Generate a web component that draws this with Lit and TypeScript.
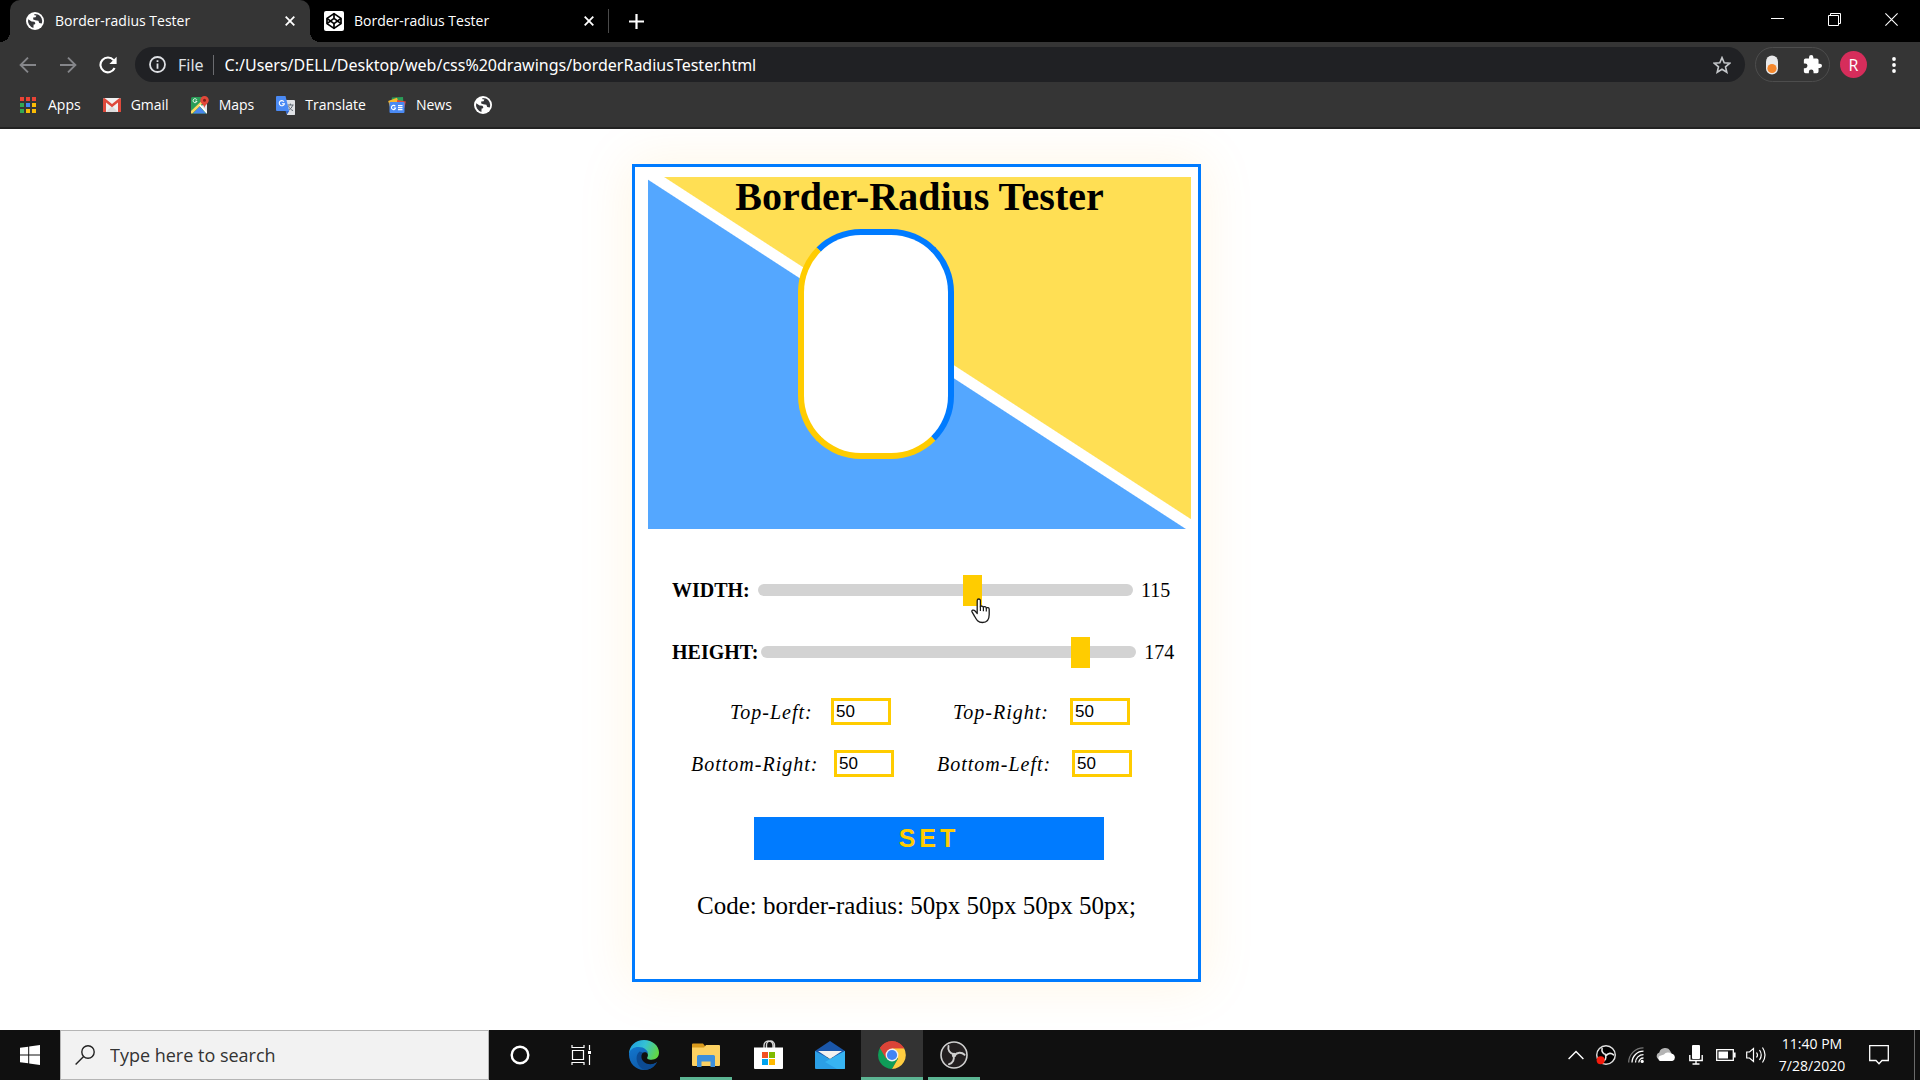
import { LitElement, html, css } from "lit";
import { customElement, property, state } from "lit/decorators.js";
import { styleMap } from "lit/directives/style-map.js";

/* ---------- icons ---------- */

const globe = html`<svg width="18" height="18" viewBox="0 0 18 18" aria-hidden="true">
  <circle cx="9" cy="9" r="9" fill="#fff" />
  <path d="M2.2 7.2 L5.6 9.6 L8.4 9.8 L9.4 11.2 L8.6 12.4 L7.6 12.6 L7.4 15.9 A7.2 7.2 0 0 1 2.2 7.2Z" fill="#35363a" />
  <path d="M8.4 2 L12 2.6 A7.2 7.2 0 0 1 15.8 11.4 L13.2 11 L12.4 8.8 L9.4 8.2 L7.2 7.4 L7.2 5.6 L9.6 5.2 L10.4 3.6 L8.4 3.2Z" fill="#35363a" />
</svg>`;

const codepen = html`<svg width="20" height="20" viewBox="0 0 20 20" aria-hidden="true">
  <rect width="20" height="20" rx="2" fill="#fff" />
  <g fill="none" stroke="#000" stroke-width="1.7" stroke-linejoin="round">
    <path d="M10 2.6 L17 7.4 V12.6 L10 17.4 L3 12.6 V7.4Z" />
    <path d="M10 2.6 V7.4 M10 12.6 V17.4 M3 7.4 L10 12.6 L17 7.4 M3 12.6 L10 7.4 L17 12.6" />
  </g>
</svg>`;

const cross = html`<svg width="10" height="10" viewBox="0 0 10 10" aria-hidden="true">
  <path d="M.7 .7 L9.3 9.3 M9.3 .7 L.7 9.3" stroke="#fff" stroke-width="1.8" />
</svg>`;

const plus = html`<svg width="15" height="15" viewBox="0 0 15 15" aria-hidden="true">
  <path d="M7.5 0 V15 M0 7.5 H15" stroke="#fff" stroke-width="2.2" />
</svg>`;

const minimize = html`<svg width="13" height="13" viewBox="0 0 13 13" aria-hidden="true">
  <path d="M0 5.5 H13" stroke="#fff" />
</svg>`;

const restore = html`<svg width="13" height="13" viewBox="0 0 13 13" aria-hidden="true">
  <path d="M.5 2.5 H10.5 V12.5 H.5Z M2.5 2.5 V.5 H12.5 V10.5 H10.5" fill="none" stroke="#fff" />
</svg>`;

const closeWindow = html`<svg width="13" height="13" viewBox="0 0 13 13" aria-hidden="true">
  <path d="M.4 .4 L12.6 12.6 M12.6 .4 L.4 12.6" stroke="#fff" stroke-width="1.1" />
</svg>`;

const back = html`<svg width="18" height="18" viewBox="0 0 18 18" aria-hidden="true">
  <path d="M17 9 H2 M9 1.6 L1.6 9 L9 16.4" fill="none" stroke="#85868a" stroke-width="1.9" />
</svg>`;

const forward = html`<svg width="18" height="18" viewBox="0 0 18 18" aria-hidden="true">
  <path d="M1 9 H16 M9 1.6 L16.4 9 L9 16.4" fill="none" stroke="#85868a" stroke-width="1.9" />
</svg>`;

const reload = html`<svg width="18" height="18" viewBox="0 0 18 18" aria-hidden="true">
  <path d="M15.6 12 A7.4 7.4 0 1 1 14.6 4.2" fill="none" stroke="#fff" stroke-width="2.1" />
  <path d="M17.6 .8 V8 H10.4Z" fill="#fff" />
</svg>`;

const info = html`<svg width="17" height="17" viewBox="0 0 17 17" aria-hidden="true">
  <circle cx="8.5" cy="8.5" r="7.5" fill="none" stroke="#dfe1e5" stroke-width="1.8" />
  <path d="M7.6 4.2 H9.4 V6 H7.6Z M7.6 7.4 H9.4 V12.8 H7.6Z" fill="#dfe1e5" />
</svg>`;

const star = html`<svg width="18" height="18" viewBox="0 0 18 18" aria-hidden="true">
  <path d="M9 1.6 L11.2 6.7 L16.7 7.2 L12.5 10.8 L13.8 16.2 L9 13.3 L4.2 16.2 L5.5 10.8 L1.3 7.2 L6.8 6.7Z"
    fill="none" stroke="#c4c7ca" stroke-width="1.6" />
</svg>`;

const toggle = html`<svg width="12" height="20" viewBox="0 0 12 20" aria-hidden="true">
  <rect width="12" height="19" rx="6" y=".5" fill="#e9e9ea" />
  <circle cx="6" cy="13.5" r="4.6" fill="#f5872b" />
</svg>`;

const puzzle = html`<svg width="19" height="19" viewBox="1 1 22 22" aria-hidden="true">
  <path d="M20.5 11H19V7a2 2 0 0 0-2-2h-4V3.5a2.5 2.5 0 0 0-5 0V5H4a2 2 0 0 0-2 2v3.8h1.5a2.7 2.7 0 0 1 0 5.4H2V20a2 2 0 0 0 2 2h3.8v-1.500a2.7 2.7 0 0 1 5.4 0V22H17a2 2 0 0 0 2-2v-4h1.500a2.500 2.500 0 0 0 0-5z" fill="#fff" />
</svg>`;

const dots = html`<svg width="4" height="16" viewBox="0 0 4 16" aria-hidden="true">
  <circle cx="2" cy="2" r="1.9" fill="#fff" /><circle cx="2" cy="8" r="1.9" fill="#fff" /><circle cx="2" cy="14" r="1.9" fill="#fff" />
</svg>`;

const apps = html`<svg width="18" height="18" viewBox="0 0 18 18" aria-hidden="true">
  <path d="M0 1h4v4h-4zM6 1h4v4h-4zM12 1h4v4h-4z" fill="#ea4335" />
  <path d="M0 7h4v4h-4zM0 13h4v4h-4z" fill="#34a853" />
  <path d="M6 7h4v4h-4z" fill="#4285f4" />
  <path d="M12 7h4v4h-4zM6 13h4v4h-4zM12 13h4v4h-4z" fill="#fbbc05" />
</svg>`;

const gmail = html`<svg width="18" height="18" viewBox="0 0 18 18" aria-hidden="true">
  <rect x="0" y="2" width="18" height="14" rx="1.500" fill="#f1f1f1" />
  <path d="M3 16 L9 10 L15 16Z" fill="#dcdcdc" />
  <path d="M0 3.500 A1.500 1.500 0 0 1 1.500 2 L9 8 L16.500 2 A1.500 1.500 0 0 1 18 3.500 V16 H15 V6.400 L9 11.200 L3 6.400 V16 H0Z" fill="#de4a3c" />
</svg>`;

const maps = html`<svg width="18" height="18" viewBox="0 0 18 18" aria-hidden="true">
  <rect y="1" width="16" height="16.500" rx="1.500" fill="#2a9d58" />
  <path d="M2 17.500 L8.500 10.500 L15 17.500Z" fill="#4a86ee" />
  <path d="M16 8 V17 L9 10Z" fill="#e4e6e8" />
  <path d="M0 15 L11 4.500 L12.600 6.200 L1.400 17.500 H0Z" fill="#fdd663" />
  <path d="M8.200 9.600 L9.400 8.400 L16 15.600 V17.500 H15.400Z" fill="#fff" />
  <path d="M13.500 0 A4.300 4.300 0 0 1 17.800 4.300 C17.800 7.500 14 8.500 13.500 12 C13 8.500 9.200 7.500 9.200 4.300 A4.300 4.300 0 0 1 13.500 0Z" fill="#e2483a" />
  <circle cx="13.500" cy="4.200" r="1.500" fill="#7e2017" />
  <path d="M5.800 3.700 A2 2 0 1 0 6 5.200 H4.200" fill="none" stroke="#fff" stroke-width=".9" />
</svg>`;

const translate = html`<svg width="19" height="19" viewBox="0 0 19 19" aria-hidden="true">
  <path d="M8 4 H18 A1 1 0 0 1 19 5 V17.500 A1.200 1.200 0 0 1 18 19 H11Z" fill="#dfe1e5" />
  <path d="M11.500 9 H17.600 M14.400 7.600 V9 M16.600 9.200 C16 11.600 14 13.600 12 14.600 M12.600 10.200 C13.400 12.200 15 13.800 17 14.600" fill="none" stroke="#5c6670" stroke-width="1" />
  <path d="M1 0 H9.500 L13.200 15 H1 A1 1 0 0 1 0 14 V1 A1 1 0 0 1 1 0Z" fill="#4a8af4" />
  <path d="M9.500 15 H13.200 L11 18.600Z" fill="#2f63c8" />
  <path d="M8 5.700 A2.600 2.600 0 1 0 8.400 7.800 H5.900" fill="none" stroke="#fff" stroke-width="1.100" />
</svg>`;

const news = html`<svg width="18" height="18" viewBox="0 0 18 18" aria-hidden="true">
  <path d="M3.800 1.600 L15 1 L15.500 8 H4Z" fill="#2a9d58" />
  <path d="M.2 5 L9 1.800 L11.500 9 L2 11Z" fill="#f9b82c" />
  <path d="M9 4 L17.800 5.400 L16.400 12 L9 10Z" fill="#e2483a" />
  <rect x="1.500" y="6" width="15" height="11" rx="1" fill="#4a8af4" />
  <path d="M7.300 10.300 A2.100 2.100 0 1 0 7.600 12 H5.700" fill="none" stroke="#fff" stroke-width="1.100" />
  <path d="M10 9.600 H14.500 M10 11.600 H14.500 M10 13.600 H14.500" stroke="#fff" stroke-width="1.100" />
</svg>`;

const pointer = html`<svg class="pointer" width="20" height="26" viewBox="0 0 20 26" aria-hidden="true">
  <path d="M6.200 15.500 V2.600 A1.600 1.600 0 0 1 9.400 2.600 V9 C9.600 7.600 12.200 7.700 12.400 9.300 C12.900 8.200 15.200 8.500 15.300 10 C16.200 9.200 18.200 9.600 18.200 11.300 V16.500 C18.200 20 17 24.500 11.500 24.500 C6.500 24.500 5.200 21.200 3.200 17.600 C2.400 16.100 1.300 14.600 .9 13.500 C.6 12.300 2.200 11.600 3.300 12.400 C4.500 13.200 5 14.300 6.200 15.500Z"
    fill="#fff" stroke="#1a1a1a" stroke-width="1.300" stroke-linejoin="round" />
  <path d="M9.400 8.500 V13 M12.400 9.300 V13.200 M15.300 10 V13.600" stroke="#1a1a1a" stroke-width="1.200" />
</svg>`;

const windowsLogo = html`<svg width="20" height="20" viewBox="0 0 20 20" aria-hidden="true">
  <path d="M0 2.800 L8.200 1.700 V9.500 H0Z M9.200 1.500 L20 0 V9.500 H9.200Z M0 10.500 H8.200 V18.300 L0 17.200Z M9.200 10.500 H20 V20 L9.200 18.500Z" fill="#fff" />
</svg>`;

const magnifier = html`<svg width="20" height="20" viewBox="0 0 20 20" aria-hidden="true">
  <circle cx="13" cy="7" r="6.200" fill="none" stroke="#222" stroke-width="1.400" />
  <path d="M8.600 11.400 L.6 19.400" stroke="#222" stroke-width="1.400" />
</svg>`;

const cortana = html`<svg width="20" height="20" viewBox="0 0 20 20" aria-hidden="true">
  <circle cx="10" cy="10" r="8.300" fill="none" stroke="#fff" stroke-width="2.400" />
</svg>`;

const taskView = html`<svg width="22" height="20" viewBox="0 0 22 20" aria-hidden="true">
  <path d="M1.500 5.500 H12.500 V14.500 H1.500Z M1 0 V2.500 H13 V0 M1 20 V17.500 H13 V20 M18.500 0 V5 M18.500 10 V20" fill="none" stroke="#fff" stroke-width="1.200" />
  <rect x="17" y="6" width="3" height="3" fill="#fff" />
</svg>`;

const edge = html`<svg width="30" height="30" viewBox="0 0 30 30" aria-hidden="true">
  <defs>
    <linearGradient id="e1" x1="0" y1=".2" x2="1" y2=".5"><stop offset="0" stop-color="#1d9ee2" /><stop offset=".5" stop-color="#35c1d4" /><stop offset="1" stop-color="#62d644" /></linearGradient>
    <linearGradient id="e2" x1="0" y1="0" x2=".6" y2="1"><stop offset="0" stop-color="#1277cf" /><stop offset="1" stop-color="#0f5aa8" /></linearGradient>
  </defs>
  <path d="M0 14 C0 6 6.500 0 15 0 C23.500 0 30 5.800 30 12.600 C30 17.500 26.500 19.800 22.500 19.800 C18.800 19.800 17.500 18.500 18.500 17 C20 14.500 18 10.500 13 10.500 C8 8 2 10.500 0 14Z" fill="url(#e1)" />
  <path d="M0 14.500 C0 9.500 5 7 9.500 7 C15.500 7 18.800 10.500 19 13.500 C17 11.300 11.500 12 11 17.500 C10.800 22.500 16 26.800 22 25 C24.500 24.400 26.500 23.200 28 22 C25.500 27 20.500 30 15 30 C6.500 30 0 23 0 14.500Z" fill="url(#e2)" />
  <path d="M10.500 11.500 C5 16 7.500 27 15.500 29.900 C20.500 29.900 25.500 27 28 22 C24 25 18.500 25 15 22 C11.500 19 12 14.500 14 12.500Z" fill="#0c4b93" />
</svg>`;

const folder = html`<svg width="28" height="24" viewBox="0 0 28 24" aria-hidden="true">
  <path d="M0 1.500 A1 1 0 0 1 1 .5 H11 L13 3 V7 H0Z" fill="#d99a1c" />
  <path d="M0 4.500 H12 L14 2 H27 A1 1 0 0 1 28 3 V22 A1 1 0 0 1 27 23 H1 A1 1 0 0 1 0 22Z" fill="#fcd162" />
  <path d="M5 24 V13.500 A1.500 1.500 0 0 1 6.500 12 H21.500 A1.500 1.500 0 0 1 23 13.500 V24 H18.500 V18.500 H9.500 V24Z" fill="#3d8fdb" />
</svg>`;

const store = html`<svg width="29" height="30" viewBox="0 0 29 30" aria-hidden="true">
  <path d="M10 8 V5.500 A4.500 4.500 0 0 1 19 5.500 V8 M12.500 8 V5 A4 4 0 0 1 20.500 5 V8" fill="none" stroke="#d8d8d8" stroke-width="1.400" />
  <path d="M0 7.500 H29 V28 A1 1 0 0 1 28 29 H1 A1 1 0 0 1 0 28Z" fill="#fff" />
  <path d="M8 12 h6 v6 h-6z" fill="#f25022" /><path d="M15 12 h6 v6 h-6z" fill="#7fba00" />
  <path d="M8 19 h6 v6 h-6z" fill="#00a4ef" /><path d="M15 19 h6 v6 h-6z" fill="#ffb900" />
</svg>`;

const mail = html`<svg width="30" height="28" viewBox="0 0 30 28" aria-hidden="true">
  <path d="M15 0 L30 10 V16 H0 V10Z" fill="#1a56a8" />
  <path d="M0 10 L15 18 L30 10 V27 A1 1 0 0 1 29 28 H1 A1 1 0 0 1 0 27Z" fill="#2b9fe6" />
  <path d="M30 10 L10 21 L22 28 H29 A1 1 0 0 0 30 27Z" fill="#37b4f2" />
  <path d="M3 10 H27 L15 18Z" fill="#f4f2f0" />
</svg>`;

const chrome = html`<svg width="28" height="28" viewBox="0 0 28 28" aria-hidden="true">
  <path d="M14 14 L1.900 7 A14 14 0 0 1 26.100 7Z" fill="#db4437" />
  <path d="M14 14 L1.900 7 A14 14 0 0 0 14 28 L20.100 17.500Z" fill="#0f9d58" />
  <path d="M14 14 L20.100 17.500 L14 28 A14 14 0 0 0 26.100 7.300 H14Z" fill="#ffcd40" />
  <path d="M1.900 7 L8 17.500 L14 14 L14 7.300 H26.100 A14 14 0 0 0 1.900 7Z" fill="#db4437" />
  <circle cx="14" cy="14" r="6.400" fill="#f1f1f1" /><circle cx="14" cy="14" r="5.100" fill="#4285f4" />
</svg>`;

const obs = html`<svg width="28" height="28" viewBox="0 0 28 28" aria-hidden="true">
  <circle cx="14" cy="14" r="13" fill="#231f20" stroke="#d0d0d0" stroke-width="1.600" />
  <g fill="none" stroke="#cfcfcf" stroke-width="1.900" stroke-linecap="round">
    <path d="M8.500 5 C7.500 9 10 12.800 14 13.200" />
    <path d="M8.500 5 C7.500 9 10 12.800 14 13.200" transform="rotate(120 14 14)" />
    <path d="M8.500 5 C7.500 9 10 12.800 14 13.200" transform="rotate(240 14 14)" />
  </g>
  <circle cx="14" cy="14" r="2.200" fill="#cfcfcf" />
</svg>`;

const chevronUp = html`<svg width="16" height="10" viewBox="0 0 16 10" aria-hidden="true">
  <path d="M.6 9 L8 1.500 L15.400 9" fill="none" stroke="#fff" stroke-width="1.400" />
</svg>`;

const obsTray = html`<svg width="20" height="20" viewBox="0 0 28 28" aria-hidden="true">
  <circle cx="14" cy="14" r="13" fill="#000" stroke="#e0e0e0" stroke-width="2" />
  <g fill="none" stroke="#e8e8e8" stroke-width="2.200" stroke-linecap="round">
    <path d="M8.500 5 C7.500 9 10 12.800 14 13.200" />
    <path d="M8.500 5 C7.500 9 10 12.800 14 13.200" transform="rotate(120 14 14)" />
    <path d="M8.500 5 C7.500 9 10 12.800 14 13.200" transform="rotate(240 14 14)" />
  </g>
  <circle cx="6.500" cy="21.500" r="5.600" fill="#f51b0c" />
</svg>`;

const wifi = html`<svg width="16" height="16" viewBox="0 0 16 16" aria-hidden="true">
  <g fill="none" stroke-width="1.300">
    <path d="M.7 15.500 A14.800 14.800 0 0 1 15.500 .8" stroke="#777" />
    <path d="M4 15.500 A11.500 11.500 0 0 1 15.500 4.200" stroke="#fff" />
    <path d="M7.500 15.500 A8 8 0 0 1 15.500 7.600" stroke="#fff" />
    <path d="M10.800 15.500 A4.700 4.700 0 0 1 15.500 11" stroke="#fff" />
  </g>
  <circle cx="14.200" cy="14.400" r="1.600" fill="#fff" />
</svg>`;

const cloud = html`<svg width="20" height="14" viewBox="0 0 20 14" aria-hidden="true">
  <path d="M3.500 11.500 A3.600 3.600 0 0 1 3.300 4.500 A6 6 0 0 1 14.500 3.500 L16 6 L8 12Z" fill="#b4b4b4" />
  <path d="M4 13 A3 3 0 0 1 3.500 8 L8 6.500 A5 5 0 0 1 15.500 5.800 A3.700 3.700 0 0 1 16.300 13Z" fill="#fff" />
</svg>`;

const mic = html`<svg width="14" height="20" viewBox="0 0 14 20" aria-hidden="true">
  <rect x="3" y="0" width="8" height="14" rx="1" fill="#fff" />
  <path d="M.8 10 V15.500 H13.200 V10 M7 15.500 V19 M3.500 19 H10.500" fill="none" stroke="#fff" stroke-width="1.400" />
</svg>`;

const battery = html`<svg width="20" height="12" viewBox="0 0 20 12" aria-hidden="true">
  <path d="M.7 .7 H17.300 V11.300 H.7Z" fill="none" stroke="#fff" stroke-width="1.300" />
  <rect x="2.500" y="2.500" width="9.500" height="7" fill="#fff" /><rect x="18" y="3.500" width="1.600" height="5" fill="#fff" />
</svg>`;

const speaker = html`<svg width="21" height="18" viewBox="0 0 21 18" aria-hidden="true">
  <path d="M.7 6 H3.500 L7.500 2.500 V15.500 L3.500 12 H.7Z" fill="none" stroke="#fff" stroke-width="1.200" />
  <g fill="none" stroke="#fff" stroke-width="1.200">
    <path d="M10.500 6.500 Q12.500 9 10.500 11.500" /><path d="M13.500 4 Q17 9 13.500 14" /><path d="M16.500 1.500 Q21.500 9 16.500 16.500" />
  </g>
</svg>`;

const notifications = html`<svg width="20" height="20" viewBox="0 0 20 20" aria-hidden="true">
  <path d="M.7 .7 H19.300 V15.500 H13 L10 18.800 L7 15.500 H.7Z" fill="none" stroke="#fff" stroke-width="1.300" />
</svg>`;

/* ---------- browser frame ---------- */

@customElement("browser-bar")
export class BrowserBar extends LitElement {
  static styles = css`
    :host { display: block; color: #fff; font: 14px/20px "Open Sans", "Noto Sans", sans-serif; background: #353535; }
    button { all: unset; box-sizing: border-box; display: flex; align-items: center; justify-content: center; flex: none; }
    svg { display: block; flex: none; }
    .strip { display: flex; height: 42px; background: #000; padding-left: 10px; }
    .tab { display: flex; align-items: center; width: 300px; padding: 0 15px 0 16px; box-sizing: border-box; gap: 11px; }
    .tab.active { background: #353535; border-radius: 10px 10px 0 0; position: relative; }
    .tab.active::before, .tab.active::after { content: ""; position: absolute; bottom: 0; width: 10px; height: 10px; }
    .tab.active::before { right: 100%; background: radial-gradient(circle at 0 0, transparent 10px, #353535 10px); }
    .tab.active::after { left: 100%; background: radial-gradient(circle at 100% 0, transparent 10px, #353535 10px); }
    .tab.idle { width: 298px; padding: 0 14px; gap: 10px; }
    .title { flex: 1; white-space: nowrap; justify-content: flex-start; }
    .split { width: 1px; height: 24px; background: #4a4a4a; align-self: center; }
    .add { width: 54px; }
    .window { display: flex; margin-left: auto; padding-bottom: 4px; }
    .window button { width: 57px; }
    .tools { display: flex; align-items: center; height: 45px; }
    .tools > .nav { width: 40px; }
    .back { margin-left: 8px; }
    .omnibox { display: flex; flex: 1; align-items: center; height: 35px; margin-left: 7px; padding: 0 14px; border-radius: 18px; background: #202124; font-family: "Noto Sans", "Open Sans", sans-serif; font-size: 16px; color: #dfe1e5; }
    .scheme { margin-left: 12px; }
    .bar { width: 1px; height: 20px; margin: 0 11px 0 9px; background: #6b6c70; }
    .url { flex: 1; min-width: 0; border: 0; padding: 0; background: none; outline: 0; color: #fff; font: inherit; }
    .extensions { display: flex; align-items: center; box-sizing: border-box; width: 75px; height: 35px; margin-left: 10px; padding: 0 7px 0 10px; justify-content: space-between; border: 1px solid #4d4d4d; border-radius: 18px; }
    .avatar { width: 27px; height: 27px; margin-left: 10px; border-radius: 50%; background: #d62d5b; font-size: 16px; }
    .more { width: 53px; }
    .bookmarks { display: flex; align-items: center; gap: 22px; height: 36px; padding: 0 20px 4px; border-bottom: 2px solid #222; }
    .bookmarks a { display: flex; align-items: center; gap: 10px; color: inherit; text-decoration: none; }
  `;

  render() {
    return html`
      <div class="strip">
        <div class="tab active">${globe}<button class="title">Border-radius Tester</button><button aria-label="Close tab">${cross}</button></div>
        <div class="tab idle">${codepen}<button class="title">Border-radius Tester</button><button aria-label="Close tab">${cross}</button></div>
        <span class="split"></span>
        <button class="add" aria-label="New tab">${plus}</button>
        <div class="window">
          <button aria-label="Minimize">${minimize}</button>
          <button aria-label="Restore">${restore}</button>
          <button aria-label="Close">${closeWindow}</button>
        </div>
      </div>
      <div class="tools">
        <button class="nav back" aria-label="Back">${back}</button>
        <button class="nav" aria-label="Forward">${forward}</button>
        <button class="nav" aria-label="Reload">${reload}</button>
        <div class="omnibox">
          ${info}<span class="scheme">File</span><span class="bar"></span>
          <input class="url" aria-label="Address" value="C:/Users/DELL/Desktop/web/css%20drawings/borderRadiusTester.html" />
          <button aria-label="Bookmark this page">${star}</button>
        </div>
        <div class="extensions">
          <button aria-label="Toggle extension">${toggle}</button>
          <button aria-label="Extensions">${puzzle}</button>
        </div>
        <button class="avatar" aria-label="Profile">R</button>
        <button class="more" aria-label="Menu">${dots}</button>
      </div>
      <nav class="bookmarks">
        <a href="#apps">${apps}Apps</a>
        <a href="#gmail">${gmail}Gmail</a>
        <a href="#maps">${maps}Maps</a>
        <a href="#translate">${translate}Translate</a>
        <a href="#news">${news}News</a>
        <a href="#site" aria-label="Site">${globe}</a>
      </nav>
    `;
  }
}

/* ---------- tester card ---------- */

@customElement("radius-tester")
export class RadiusTester extends LitElement {
  static styles = css`
    :host { display: block; box-sizing: border-box; border: 3px solid #007bff; padding: 10px 7px 58px 13px; background: #fff; box-shadow: 0 0 50px 4px rgba(255, 165, 0, 0.1); color: #000; font: 20px/24px "Liberation Serif", "Times New Roman", serif; }
    .stage { height: 352px; background: linear-gradient(33deg, #54a7ff calc(50% - 3px), #fff calc(50% - 2px), #fff calc(50% + 8px), #ffdf54 calc(50% + 9px)); }
    h1 { margin: 0; text-align: center; font-size: 40px; line-height: 40px; }
    .shape { margin: 12px 0 0 150px; border: 6px solid; border-color: #007bff #007bff #ffcc00 #ffcc00; background: #fff; }
    form { padding-left: 24px; }
    .slider { display: flex; align-items: center; gap: 3px; height: 40px; margin-top: 22px; position: relative; }
    .slider.first { margin-top: 41px; }
    .slider label { min-width: 83px; font-weight: bold; }
    .slider output { margin-left: 5px; }
    input[type="range"] { appearance: none; -webkit-appearance: none; flex: none; width: 375px; height: 12px; margin: 0; border-radius: 6px; background: #d3d3d3; cursor: pointer; outline: 0; }
    input[type="range"]::-webkit-slider-thumb { -webkit-appearance: none; width: 19px; height: 31px; background: #ffcc00; }
    .pointer { position: absolute; left: 299px; top: 28px; }
    .corners { display: grid; align-items: center; height: 27px; font-style: italic; letter-spacing: 1px; }
    .corners.top { grid-template-columns: 101px 122px 117px 60px; margin-top: 26px; padding-left: 58px; }
    .corners.bottom { grid-template-columns: 143px 103px 135px 60px; margin-top: 25px; padding-left: 19px; }
    .corners input { box-sizing: border-box; width: 60px; height: 27px; border: 3px solid #ffcc00; padding: 0 2px; background: #fff; color: #000; outline: 0; font: 17px "Liberation Sans", Arial, sans-serif; }
    .set { display: block; width: 350px; height: 43px; margin: 40px 0 0 82px; border: 0; padding: 0; background: #007bff; color: #ffcc00; font: bold 25px "Liberation Sans", Arial, sans-serif; letter-spacing: 4px; }
    .code { margin: 31px 6px 0 0; font-size: 25px; line-height: 30px; text-align: center; }
  `;

  @property({ type: Number }) width = 115;
  @property({ type: Number }) height = 174;
  @state() private corners = [50, 50, 50, 50];
  private draft = [50, 50, 50, 50];

  private edit(index: number, event: Event) {
    this.draft[index] = Number((event.target as HTMLInputElement).value) || 0;
  }

  private apply(event: Event) {
    event.preventDefault();
    this.corners = [...this.draft];
  }

  private corner(index: number, name: string) {
    const id = `corner-${index}`;
    return html`<label for=${id}>${name}:</label>
      <input id=${id} type="text" inputmode="numeric" value="50" @input=${(e: Event) => this.edit(index, e)} />`;
  }

  render() {
    /* The preview is drawn at 1.25 times the entered sizes. */
    const scale = (n: number) => `${Math.round(n * 1.25)}px`;
    const shape = {
      width: scale(this.width),
      height: scale(this.height),
      borderRadius: this.corners.map(scale).join(" "),
    };
    return html`
      <div class="stage">
        <h1>Border-Radius Tester</h1>
        <div class="shape" style=${styleMap(shape)}></div>
      </div>
      <form @submit=${this.apply}>
        <div class="slider first">
          <label for="width">WIDTH:</label>
          <input id="width" type="range" min="0" max="200" .value=${String(this.width)}
            @input=${(e: Event) => (this.width = Number((e.target as HTMLInputElement).value))} />
          <output for="width">${this.width}</output>
          ${pointer}
        </div>
        <div class="slider">
          <label for="height">HEIGHT:</label>
          <input id="height" type="range" min="0" max="200" .value=${String(this.height)}
            @input=${(e: Event) => (this.height = Number((e.target as HTMLInputElement).value))} />
          <output for="height">${this.height}</output>
        </div>
        <div class="corners top">${this.corner(0, "Top-Left")}${this.corner(1, "Top-Right")}</div>
        <div class="corners bottom">${this.corner(2, "Bottom-Right")}${this.corner(3, "Bottom-Left")}</div>
        <button class="set">SET</button>
      </form>
      <p class="code">Code: border-radius: ${this.corners.map((c) => `${c}px`).join(" ")};</p>
    `;
  }
}

/* ---------- desktop task bar ---------- */

@customElement("task-bar")
export class TaskBar extends LitElement {
  static styles = css`
    :host { display: flex; height: 50px; background: #101010; color: #fff; font: 15px/22px "Open Sans", "Noto Sans", sans-serif; }
    button { all: unset; box-sizing: border-box; display: flex; align-items: center; justify-content: center; flex: none; }
    svg { display: block; flex: none; }
    .start { width: 60px; }
    .search { display: flex; align-items: center; gap: 15px; box-sizing: border-box; width: 429px; padding: 0 14px; border: 1px solid #b5b5b5; background: #f2f2f2; }
    .search input { flex: 1; min-width: 0; border: 0; padding: 0; background: none; outline: 0; color: #333; font: 18px "Open Sans", "Noto Sans", sans-serif; }
    .search input::placeholder { color: #333; opacity: 1; }
    .app { width: 62px; border-bottom: 3px solid transparent; border-top: 3px solid transparent; position: relative; }
    .app.active { background: #333; }
    .app.open::after { content: ""; position: absolute; left: 5px; right: 5px; bottom: -3px; height: 3px; background: #5cb593; }
    .app.active::after { left: 0; right: 0; }
    .tray { display: flex; margin-left: auto; padding-right: 9px; }
    .tray button { width: 30px; }
    .tray .clock { width: 82px; flex-direction: column; font-size: 14px; }
    .tray .notes { width: 52px; }
    .desktop { width: 6px; border-left: 1px solid #6a6a6a; }
  `;

  private app(name: string, icon: unknown, mode = "") {
    return html`<button class="app ${mode}" aria-label=${name}>${icon}</button>`;
  }

  render() {
    return html`
      <button class="start" aria-label="Start">${windowsLogo}</button>
      <label class="search">${magnifier}<input type="text" aria-label="Search" placeholder="Type here to search" /></label>
      ${this.app("Cortana", cortana)} ${this.app("Task view", taskView)} ${this.app("Edge", edge)}
      ${this.app("File Explorer", folder, "open")} ${this.app("Store", store)} ${this.app("Mail", mail)}
      ${this.app("Chrome", chrome, "open active")} ${this.app("OBS Studio", obs, "open")}
      <div class="tray">
        <button aria-label="Hidden icons">${chevronUp}</button>
        <button aria-label="Recorder">${obsTray}</button>
        <button aria-label="Network">${wifi}</button>
        <button aria-label="Cloud storage">${cloud}</button>
        <button aria-label="Microphone">${mic}</button>
        <button aria-label="Battery">${battery}</button>
        <button aria-label="Volume">${speaker}</button>
        <button class="clock"><span>11:40 PM</span><span>7/28/2020</span></button>
        <button class="notes" aria-label="Notifications">${notifications}</button>
      </div>
      <button class="desktop" aria-label="Show desktop"></button>
    `;
  }
}

@customElement("app-root")
export class AppRoot extends LitElement {
  static styles = css`
    :host { display: flex; flex-direction: column; min-height: 100vh; background: #fff; }
    main { flex: 1; display: grid; grid-template-columns: 632fr 569px 719fr; align-items: start; padding: 35px 0 48px; overflow: hidden; }
    radius-tester { grid-column: 2; }
  `;

  render() {
    return html`
      <browser-bar></browser-bar>
      <main><radius-tester></radius-tester></main>
      <task-bar></task-bar>
    `;
  }
}
